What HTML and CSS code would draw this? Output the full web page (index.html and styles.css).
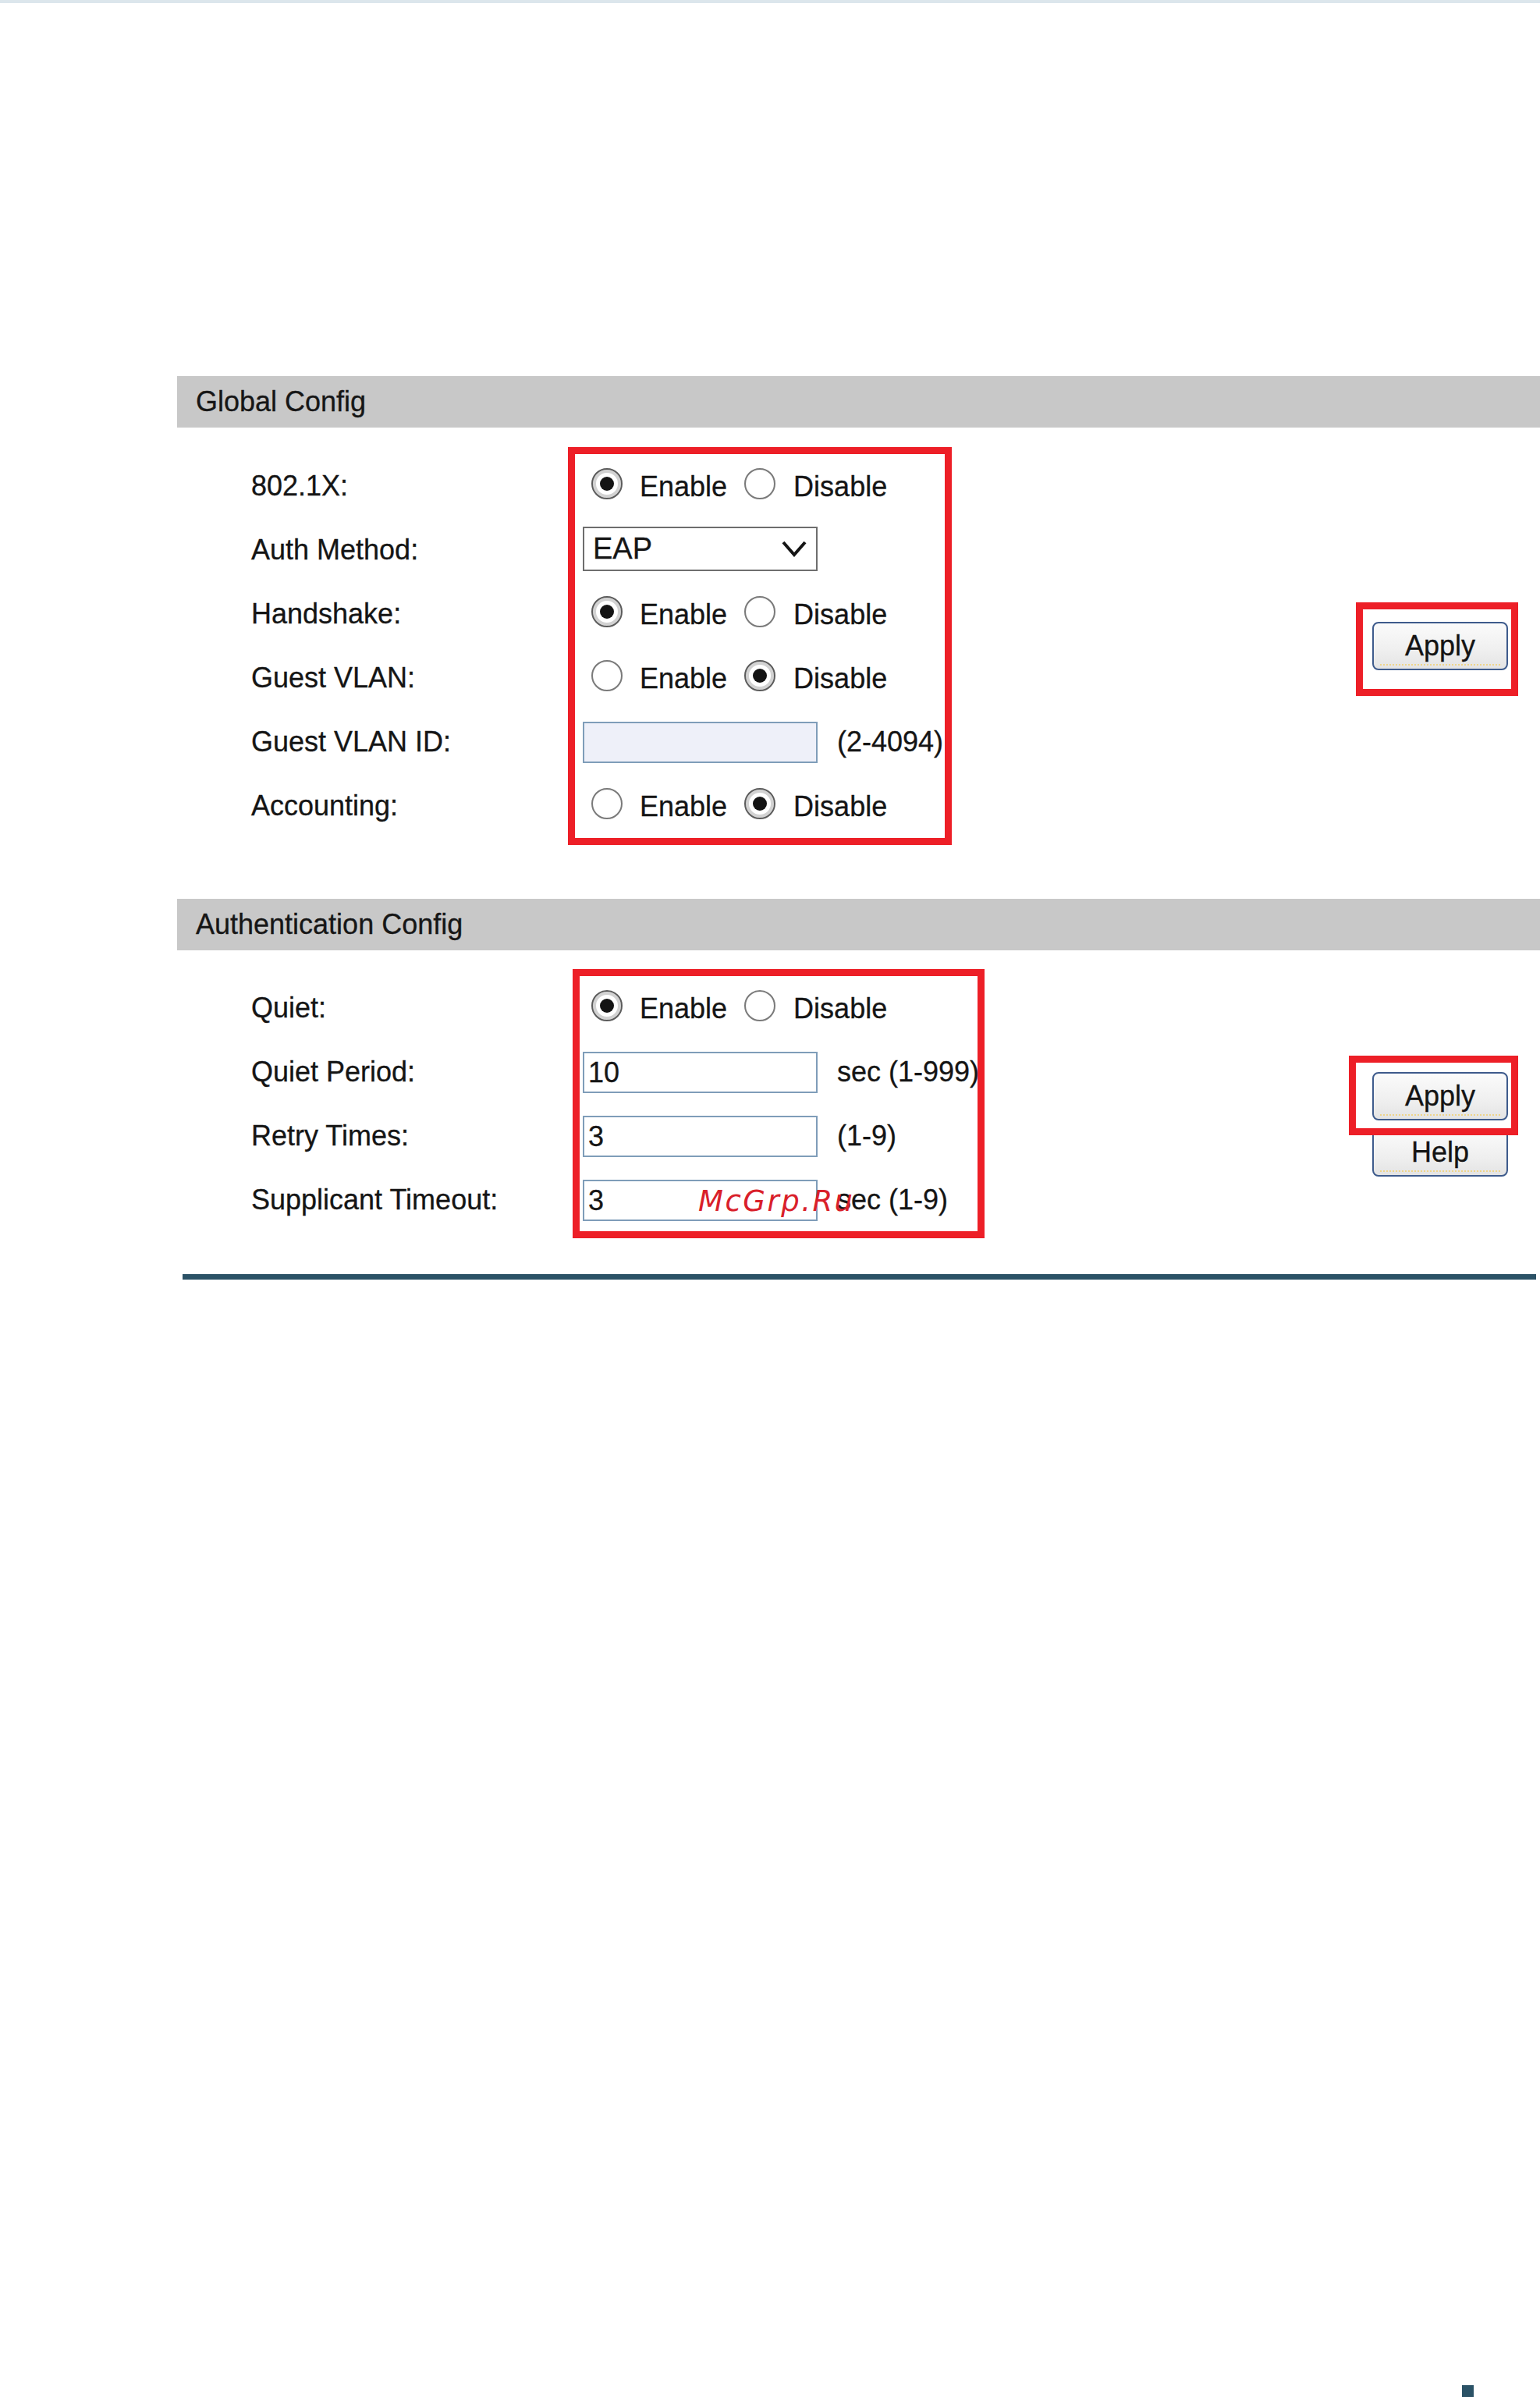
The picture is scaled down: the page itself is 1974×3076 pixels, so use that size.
FILE: index.html
```html
<!DOCTYPE html>
<html lang="en">
<head>
<meta charset="utf-8">
<title>802.1X Authentication</title>
<link rel="stylesheet" href="styles.css">
</head>
<body>
<div class="page">
  <div class="topbar"></div>

  <main class="panel">
    <section class="section">
      <h2 class="section-head">Global Config</h2>
      <div class="section-body body-global">
        <div class="label">802.1X:</div>
        <div class="ctrl">
          <span class="radio on"></span><span class="opt">Enable</span>
          <span class="radio"></span><span class="opt opt-last">Disable</span>
        </div>

        <div class="label">Auth Method:</div>
        <div class="ctrl">
          <div class="select">
            <span>EAP</span>
            <svg class="chev" width="32" height="22" viewBox="0 0 32 22"><polyline points="2,3 16,19 30,3" fill="none" stroke="#151515" stroke-width="4"/></svg>
          </div>
        </div>

        <div class="label">Handshake:</div>
        <div class="ctrl">
          <span class="radio on"></span><span class="opt">Enable</span>
          <span class="radio"></span><span class="opt opt-last">Disable</span>
        </div>

        <div class="label">Guest VLAN:</div>
        <div class="ctrl">
          <span class="radio"></span><span class="opt">Enable</span>
          <span class="radio on"></span><span class="opt opt-last">Disable</span>
        </div>

        <div class="label">Guest VLAN ID:</div>
        <div class="ctrl">
          <div class="field field-off"></div><span class="hint">(2-4094)</span>
        </div>

        <div class="label">Accounting:</div>
        <div class="ctrl">
          <span class="radio"></span><span class="opt">Enable</span>
          <span class="radio on"></span><span class="opt opt-last">Disable</span>
        </div>

        <div class="actions actions-global">
          <button class="btn" type="button">Apply</button>
        </div>

        <div class="mark mark-global"></div>
        <div class="mark mark-apply-global"></div>
      </div>
    </section>

    <section class="section">
      <h2 class="section-head">Authentication Config</h2>
      <div class="section-body body-auth">
        <div class="label">Quiet:</div>
        <div class="ctrl">
          <span class="radio on"></span><span class="opt">Enable</span>
          <span class="radio"></span><span class="opt opt-last">Disable</span>
        </div>

        <div class="label">Quiet Period:</div>
        <div class="ctrl">
          <div class="field">10</div><span class="hint">sec (1-999)</span>
        </div>

        <div class="label">Retry Times:</div>
        <div class="ctrl">
          <div class="field">3</div><span class="hint">(1-9)</span>
        </div>

        <div class="label">Supplicant Timeout:</div>
        <div class="ctrl">
          <div class="field">3</div><span class="hint">sec (1-9)</span>
        </div>

        <div class="actions actions-auth">
          <button class="btn" type="button">Apply</button>
          <button class="btn" type="button">Help</button>
        </div>

        <div class="mark mark-auth"></div>
        <div class="mark mark-apply-auth"></div>
        <span class="stamp">McGrp.Ru</span>
      </div>
    </section>

    <div class="rule"></div>
  </main>

  <footer class="foot"><span class="foot-mark"></span></footer>
</div>
</body>
</html>
```

FILE: styles.css
```css
html, body {
  margin: 0;
  padding: 0;
  background: #ffffff;
}

.page {
  height: 3076px;
  overflow: hidden;
  display: flex;
  flex-direction: column;
  font-family: "Liberation Sans", Arial, sans-serif;
  font-size: 36px;
  color: #151515;
}

.topbar {
  height: 4px;
  background: #dce6ec;
  flex: none;
}

/* settings panel */
.panel {
  margin: 478px 0 0 227px;
}

.section-head {
  margin: 0;
  height: 66px;
  line-height: 66px;
  padding-left: 24px;
  background: #c8c8c8;
  font-size: 36px;
  font-weight: normal;
  color: #161616;
  -webkit-text-stroke: 0.3px #161616;
}

.section-body {
  position: relative;
  display: grid;
  grid-template-columns: 425px 1fr 174px;
  padding: 34px 41px 78px 95px;
  -webkit-text-stroke: 0.3px #151515;
}

.body-global {
  grid-template-rows: repeat(6, 82px);
}

.body-auth {
  grid-template-rows: repeat(4, 82px);
  padding-top: 33px;
  padding-bottom: 54px;
}

.label {
  grid-column: 1;
  display: flex;
  align-items: center;
  white-space: nowrap;
}

.ctrl {
  grid-column: 2;
  display: flex;
  align-items: center;
  white-space: nowrap;
}

/* radio buttons */
.radio {
  flex: none;
  position: relative;
  box-sizing: border-box;
  width: 40px;
  height: 40px;
  margin: 0 0 6px 11px;
  border-radius: 50%;
  border: 2px solid #7a7a7a;
  background: radial-gradient(circle, #ffffff 60%, #ececec 100%);
}

.opt + .radio {
  margin-left: 22px;
}

.radio.on {
  border-color: #5c5c5c;
  box-shadow: inset 0 0 0 4px #d2d2d2;
}

.radio.on::after {
  content: "";
  position: absolute;
  left: 50%;
  top: 50%;
  width: 18px;
  height: 18px;
  border-radius: 50%;
  background: #141414;
  transform: translate(-50%, -50%);
}

.opt {
  margin-left: 22px;
  padding-top: 2px;
}

.opt-last {
  margin-left: 23px;
}

/* drop-down */
.select {
  box-sizing: border-box;
  width: 301px;
  height: 57px;
  margin-bottom: 4px;
  border: 2px solid #6e6e6e;
  display: flex;
  align-items: center;
  justify-content: space-between;
  padding: 0 12px 0 11px;
  font-size: 38px;
  color: #161616;
  background: #ffffff;
}

.chev {
  display: block;
}

/* text fields */
.field {
  box-sizing: border-box;
  width: 301px;
  height: 53px;
  border: 2px solid #7f9db9;
  background: #ffffff;
  padding-left: 5px;
  line-height: 49px;
  color: #161616;
}

.field-off {
  background: #eef0f9;
}

.hint {
  margin-left: 25px;
}

/* buttons */
.actions {
  grid-column: 3;
  grid-row: 1 / -1;
  display: flex;
  flex-direction: column;
  gap: 10px;
}

.actions-global {
  justify-content: center;
}

.actions-auth {
  padding-top: 123px;
}

.btn {
  position: relative;
  box-sizing: border-box;
  width: 174px;
  height: 62px;
  padding: 0;
  border: 2px solid #3e5b8c;
  border-radius: 8px;
  background: linear-gradient(#fbfbfb, #efefef 60%, #e4e4e4);
  font-family: inherit;
  font-size: 36px;
  color: #141414;
  -webkit-text-stroke: 0.3px #141414;
}

.btn::after {
  content: "";
  position: absolute;
  left: 8px;
  right: 8px;
  bottom: 4px;
  border-bottom: 2px dotted #efd58a;
}

/* red highlight frames */
.mark {
  position: absolute;
  box-sizing: border-box;
  border: 9px solid #ed1f27;
  pointer-events: none;
}

.mark-global {
  left: 501px;
  top: 25px;
  width: 492px;
  height: 510px;
}

.mark-apply-global {
  left: 1511px;
  top: 224px;
  width: 208px;
  height: 120px;
}

.mark-auth {
  left: 507px;
  top: 24px;
  width: 528px;
  height: 345px;
}

.mark-apply-auth {
  left: 1502px;
  top: 135px;
  width: 217px;
  height: 102px;
}

.stamp {
  position: absolute;
  left: 668px;
  top: 303px;
  font-family: "DejaVu Sans", sans-serif;
  font-style: italic;
  font-size: 37px;
  line-height: 37px;
  letter-spacing: 2.5px;
  color: #d9202a;
  -webkit-text-stroke: 0;
}

.rule {
  height: 7px;
  margin: 0 5px 0 7px;
  background: #2b5266;
}

/* page footer */
.foot {
  margin-top: auto;
  display: flex;
  justify-content: flex-end;
  padding: 0 85px 4px 0;
}

.foot-mark {
  width: 15px;
  height: 15px;
  background: #2b5266;
}
```
